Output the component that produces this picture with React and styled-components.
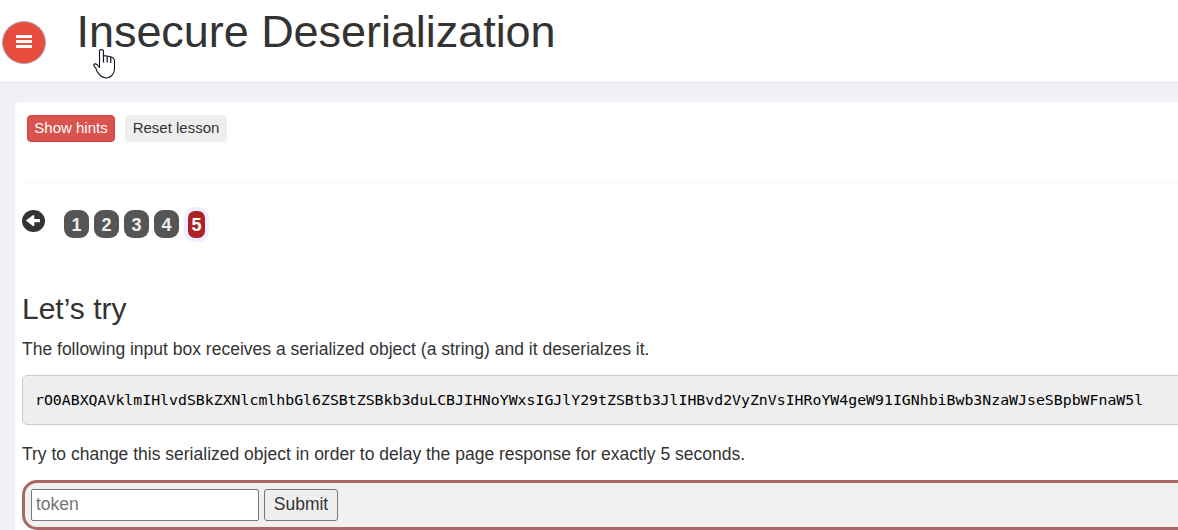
import React from 'react';
import styled, { createGlobalStyle } from 'styled-components';

const GlobalStyle = createGlobalStyle`
  * { box-sizing: border-box; }
  html, body { margin: 0; height: 100%; overflow: hidden; }
  body {
    background: #f0f1f7;
    color: #333;
    font: 17.5px/25px "Liberation Sans", Arial, sans-serif;
  }
`;

const Page = styled.div`
  position: relative;
  height: 530px;
  overflow: hidden;
`;

const Header = styled.header`
  display: flex;
  height: 83px;
  padding-left: 2px;
  background: #fff;
  border-bottom: 1px solid #e3e4e8;
`;

const MenuButton = styled.button`
  display: flex;
  align-items: center;
  justify-content: center;
  width: 44px;
  height: 43px;
  margin: 21px 0 0;
  padding: 0 0 2px;
  border: 1px solid #aaa;
  border-radius: 50%;
  background: #e84c3d;
  color: #fff;
`;

const Title = styled.h1`
  margin: 7px 0 0 28px;
  padding-left: 2.5px;
  font-size: 45px;
  line-height: 50px;
  font-weight: 400;
  letter-spacing: -0.05px;
  white-space: nowrap;
`;

const Panel = styled.main`
  width: 1190px;
  height: 450px;
  margin: 19px 0 0 15px;
  padding: 0 7px;
  border-radius: 5px;
  background: #fff;
`;

const Toolbar = styled.div`
  display: flex;
  gap: 10px;
  align-items: flex-start;
  height: 80px;
  padding: 13px 5px 0;
  border-radius: 5px;
  box-shadow: 0 1px 1px rgba(0, 0, 0, 0.05);
`;

const ToolButton = styled.button`
  width: ${(p) => p.$width}px;
  height: 27px;
  padding: 0 0 1px;
  border: 1px solid ${(p) => (p.$danger ? '#d43f3a' : '#eee')};
  border-radius: 4px;
  background: ${(p) => (p.$danger ? '#d9534f' : '#eee')};
  color: ${(p) => (p.$danger ? '#fff' : '#333')};
  font: 15px/22px "Liberation Sans", Arial, sans-serif;
  white-space: nowrap;
`;

const Pager = styled.nav`
  display: flex;
  align-items: center;
  height: 35px;
  margin-top: 25px;
`;

const BackLink = styled.a`
  display: flex;
  margin: 0 19px 7px 0;
  color: #333;
`;

const PageList = styled.div`
  display: flex;
  align-items: flex-start;
  gap: 5px;
`;

const PageBadge = styled.a`
  display: flex;
  align-items: center;
  justify-content: center;
  width: 25px;
  height: ${(p) => (p.$current ? 35 : 28)}px;
  margin-top: ${(p) => (p.$current ? 0 : 3)}px;
  padding-top: ${(p) => (p.$current ? 1 : 2)}px;
  border: ${(p) => (p.$current ? '4px solid #f0eeff' : '0')};
  border-radius: ${(p) => (p.$current ? 11 : 9)}px;
  background: ${(p) => (p.$current ? '#ad2323' : '#555')};
  color: ${(p) => (p.$current ? '#fff' : '#eee')};
  font-size: 18px;
  font-weight: 700;
`;

const Heading = styled.h2`
  margin: 50px 0 0;
  font-size: 30px;
  line-height: 33px;
  font-weight: 400;
`;

const Paragraph = styled.p`
  margin: ${(p) => p.$top}px 0 0;
  white-space: nowrap;
`;

const CodeBlock = styled.pre`
  height: 50px;
  margin: 13px 0 0;
  padding: 12px;
  border: 1px solid #ccc;
  border-radius: 5px;
  background: #eee;
  color: #000;
  font: 14.85px/24px "DejaVu Sans Mono", monospace;
`;

const AttackForm = styled.form`
  display: flex;
  align-items: flex-start;
  gap: 5px;
  height: 50px;
  margin-top: 13px;
  padding: 6px;
  border: 3px solid #a66;
  border-radius: 15px;
  background: #f0f0f0;
`;

const TokenInput = styled.input`
  width: 228px;
  height: 32px;
  padding: 0 4px 1px;
  border: 1px solid #767676;
  border-radius: 2px;
  background: #fff;
  font: 17.5px/25px "Liberation Sans", Arial, sans-serif;
  &::placeholder { color: #757575; }
`;

const SubmitButton = styled.button`
  width: 74px;
  height: 32px;
  padding: 0 0 1px;
  border: 1px solid #767676;
  border-radius: 3px;
  background: #efefef;
  color: #333;
  font: 17.5px/25px "Liberation Sans", Arial, sans-serif;
`;

const Pointer = styled.svg`
  position: absolute;
  left: 93px;
  top: 49px;
`;

const token =
  'rO0ABXQAVklmIHlvdSBkZXNlcmlhbGl6ZSBtZSBkb3duLCBJIHNoYWxsIGJlY29tZSBtb3JlIHBvd2VyZnVsIHRoYW4geW91IGNhbiBwb3NzaWJseSBpbWFnaW5l';

export default function App() {
  return (
    <Page>
      <GlobalStyle />
      <Header>
        <MenuButton aria-label="Menu">
          <svg width="16" height="13" viewBox="0 0 16 13" fill="#fff">
            <rect width="16" height="3" rx=".5" />
            <rect y="5" width="16" height="3" rx=".5" />
            <rect y="10" width="16" height="3" rx=".5" />
          </svg>
        </MenuButton>
        <Title>Insecure Deserialization</Title>
      </Header>
      <Panel>
        <Toolbar>
          <ToolButton $danger $width={88}>Show hints</ToolButton>
          <ToolButton $width={102}>Reset lesson</ToolButton>
        </Toolbar>
        <Pager>
          <BackLink aria-label="Previous page">
            <svg width="23" height="22" viewBox="0 0 23 22">
              <ellipse cx="11.5" cy="11" rx="11.5" ry="11" fill="#333" />
              <path d="M3.8 10.6 10.9 5.3H12.3V9H18V12.3H12.3V16H10.9Z" fill="#fff" />
            </svg>
          </BackLink>
          <PageList>
            {[1, 2, 3, 4, 5].map((n) => (
              <PageBadge key={n} $current={n === 5}>{n}</PageBadge>
            ))}
          </PageList>
        </Pager>
        <Heading>Let’s try</Heading>
        <Paragraph $top={12}>
          The following input box receives a serialized object (a string) and it deserialzes it.
        </Paragraph>
        <CodeBlock>{token}</CodeBlock>
        <Paragraph $top={17}>
          Try to change this serialized object in order to delay the page response for exactly 5 seconds.
        </Paragraph>
        <AttackForm onSubmit={(e) => e.preventDefault()}>
          <TokenInput placeholder="token" />
          <SubmitButton>Submit</SubmitButton>
        </AttackForm>
      </Panel>
      <Pointer width="23" height="30" viewBox="0 0 23 30">
        <path
          d="M6.5 18.5V2.2Q6.5 .6 8.5 .6T10.4 2.2V6.6L14 7 17.6 7.7 20 8.8 21.5 11V20Q21.5 23.5 19.5 25.7 17 29 12.8 29 8.6 28.6 6 25.2 3.6 22.5 2.8 19.2 .4 17 .7 15.8 1.7 14.2 4 15.5Z"
          fill="#fff"
          stroke="#111126"
          strokeWidth="1.1"
          strokeLinejoin="round"
        />
        <path d="M10.5 6.5V13.5M14.2 7V13.5M17.8 8V14" fill="none" stroke="#111126" strokeWidth="1.2" />
      </Pointer>
    </Page>
  );
}
